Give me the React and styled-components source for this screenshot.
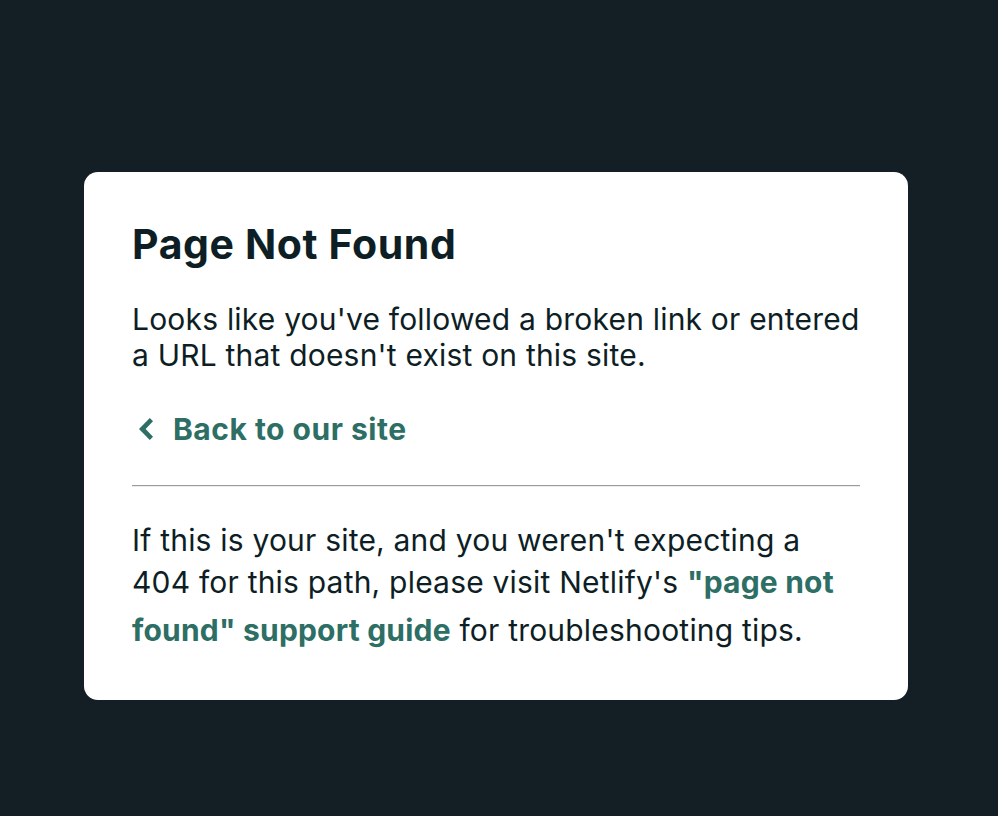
import React from "react"
import styled, { createGlobalStyle } from "styled-components"

const GlobalStyle = createGlobalStyle`
  html, body {
    margin: 0;
    padding: 0;
    background: #131e25;
    font-family: Inter, "Noto Sans", "Liberation Sans", sans-serif;
  }
`

const Page = styled.main`
  min-height: 100vh;
  box-sizing: border-box;
  padding: 172px 0 0 84px;
`

const Card = styled.section`
  width: 824px;
  box-sizing: border-box;
  padding: 48px 48px 46px;
  background: #ffffff;
  border-radius: 14px;
  color: #0e1e25;
`

const Title = styled.h1`
  margin: 0;
  font-size: 41px;
  line-height: 48px;
  font-weight: 700;
  letter-spacing: 0.6px;
`

const Text = styled.p`
  margin: ${({ $top }) => $top || 0}px 0 0;
  font-size: 30px;
  line-height: 36px;
  font-weight: 400;
  letter-spacing: 0.2px;
`

const BackLink = styled.a`
  display: flex;
  align-items: center;
  margin-top: 32px;
  font-size: 30px;
  line-height: 48px;
  font-weight: 700;
  letter-spacing: 0.5px;
  color: #2d6e65;
  text-decoration: none;

  svg {
    margin: 0 20px 0 7px;
    flex: 0 0 auto;
  }
`

const Divider = styled.hr`
  margin: 32px 0 0;
  height: 0;
  border: none;
  border-top: 1px solid #9b9b9b;
  border-bottom: 1px solid #ededed;
`

const InlineLink = styled.a`
  font-weight: 700;
  line-height: 48px;
  color: #2d6e65;
  text-decoration: none;
`

const ChevronLeft = () => (
  <svg width="14" height="22" viewBox="0 0 7 11" aria-hidden="true">
    <path d="M5.4 11L0 5.5L5.4 0L7 1.6L3.3 5.5L7 9.4Z" fill="#2d6e65" />
  </svg>
)

const App = () => {
  return (
    <>
      <GlobalStyle />
      <Page>
        <Card>
          <Title>Page Not Found</Title>
          <Text $top={33}>
            Looks like you've followed a broken link or entered a URL that
            doesn't exist on this site.
          </Text>
          <BackLink href="/">
            <ChevronLeft />
            Back to our site
          </BackLink>
          <Divider />
          <Text $top={35}>
            If this is your site, and you weren't expecting a 404 for this path,
            please visit Netlify's{" "}
            <InlineLink href="#">"page not found" support guide</InlineLink> for
            troubleshooting tips.
          </Text>
        </Card>
      </Page>
    </>
  )
}

export default App
